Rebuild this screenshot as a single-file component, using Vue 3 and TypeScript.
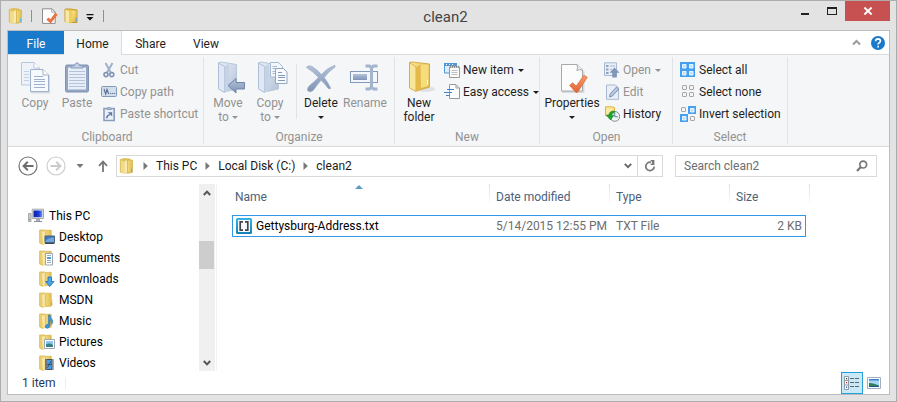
<script setup lang="ts">
import { ref } from 'vue'

interface PlaceItem {
  name: string
  icon: string
}

interface FileRow {
  name: string
  modified: string
  type: string
  size: string
}

const folderName = 'clean2'
const search = ref('')

const crumbs: string[] = ['This PC', 'Local Disk (C:)', folderName]

const places: PlaceItem[] = [
  { name: 'Desktop', icon: 'ov-desktop' },
  { name: 'Documents', icon: 'ov-documents' },
  { name: 'Downloads', icon: 'ov-downloads' },
  { name: 'MSDN', icon: 'ov-plain' },
  { name: 'Music', icon: 'ov-music' },
  { name: 'Pictures', icon: 'ov-pictures' },
  { name: 'Videos', icon: 'ov-videos' },
]

const files: FileRow[] = [
  { name: 'Gettysburg-Address.txt', modified: '5/14/2015 12:55 PM', type: 'TXT File', size: '2 KB' },
]
</script>

<template>
  <div class="window">
    <svg class="defs" width="0" height="0" aria-hidden="true">
      <defs>
        <linearGradient id="g-gold" x1="0" y1="0" x2="1" y2="1">
          <stop offset="0" stop-color="#fbe99c" />
          <stop offset="1" stop-color="#dca92f" />
        </linearGradient>
        <linearGradient id="g-gold-soft" x1="0" y1="0" x2="1" y2="0">
          <stop offset="0" stop-color="#f3da80" />
          <stop offset="1" stop-color="#dfbd52" />
        </linearGradient>
        <linearGradient id="g-steel" x1="0" y1="0" x2="1" y2="1">
          <stop offset="0" stop-color="#e9eff7" />
          <stop offset="1" stop-color="#b4c2d8" />
        </linearGradient>
        <linearGradient id="g-slate" x1="0" y1="0" x2="0" y2="1">
          <stop offset="0" stop-color="#b4c3da" />
          <stop offset="1" stop-color="#7f93b5" />
        </linearGradient>
        <linearGradient id="g-check" x1="0" y1="0" x2="0" y2="1">
          <stop offset="0" stop-color="#f79a6c" />
          <stop offset="1" stop-color="#e06432" />
        </linearGradient>
        <linearGradient id="g-file" x1="0" y1="0" x2="0" y2="1">
          <stop offset="0" stop-color="#35b6e8" />
          <stop offset="1" stop-color="#1480b8" />
        </linearGradient>
        <linearGradient id="g-screen" x1="0" y1="0" x2="1" y2="0">
          <stop offset="0" stop-color="#0a1fa8" />
          <stop offset="0.6" stop-color="#1a3ad8" />
          <stop offset="1" stop-color="#6c9cf0" />
        </linearGradient>
      </defs>
      <symbol id="folder" viewBox="0 0 16 16">
        <path d="M1.3 1.5 L5 .6 L11 1 V15 H4.5 L1.3 14Z" fill="#e2c25c" stroke="#d8b950" stroke-width=".8" />
        <path d="M2 2 L5 4 V15.5 L2 14Z" fill="#f3dc88" />
        <path d="M5.3 3.6 L8.3 2 V14.5 L5.3 15.6Z" fill="#f9eab0" />
        <path d="M8.5 2.3 L13.5 2 V14.4 L8.5 14.8Z" fill="url(#g-gold-soft)" stroke="#d3b145" stroke-width=".7" />
        <path d="M12.5 10.5 V14" stroke="#63b6e6" stroke-width="1.2" />
      </symbol>
      <symbol id="tree-folder" viewBox="0 0 16 16">
        <path d="M.6 1 H6 V14.6 L3.5 15.3 L.6 14Z" fill="#eacd6e" stroke="#d9b955" stroke-width=".8" />
        <path d="M3 3.2 L6.2 1.2 V14 L4 15.5Z" fill="#f8e8aa" />
        <path d="M6.3 1.3 H12.2 V14.2 L6.3 14.5Z" fill="url(#g-gold-soft)" stroke="#d9b955" stroke-width=".8" />
      </symbol>
      <symbol id="ov-plain" viewBox="0 0 16 16"><path d="M12.6 7.5 V14" stroke="#e2c76c" stroke-width="1.5" /><path d="M12.5 10.5 V13" stroke="#63b6e6" /></symbol>
      <symbol id="ov-desktop" viewBox="0 0 16 16">
        <path d="M6 7 H15.5 V13.5 H6Z" fill="#3f78c2" stroke="#4a6178" /><path d="M6.5 12 Q10 8 15 8.5 V13 H6.5Z" fill="#6fa6df" /><path d="M6 14.5 H15.5" stroke="#3d4c5b" />
      </symbol>
      <symbol id="ov-documents" viewBox="0 0 16 16">
        <path d="M6.5 3.5 H13.5 V15 H6.5Z" fill="#fff" stroke="#9aa7b5" /><path d="M8 5.5 H12 M8 10.5 H12 M8 12.5 H12" stroke="#97a9bf" /><path d="M8 7 H12 V9 H8Z" fill="#4f9bdc" />
      </symbol>
      <symbol id="ov-downloads" viewBox="0 0 16 16"><path d="M9 6 H12.5 V10.5 H15 L10.7 15.5 L6.5 10.5 H9Z" fill="#4aa5e8" stroke="#1c6fb8" stroke-width=".8" /></symbol>
      <symbol id="ov-music" viewBox="0 0 16 16">
        <path d="M9.5 2 H11 Q11.5 5 13.5 7 Q14.5 9.5 12.7 11.5 Q13.2 8.5 11 7.3 V12.5 Q10.5 15.5 7.7 15.3 Q5.5 14.5 6.7 12.4 Q7.8 11 9.5 11.5Z" fill="#3f97d8" stroke="#1d6aab" stroke-width=".5" />
      </symbol>
      <symbol id="ov-pictures" viewBox="0 0 16 16">
        <path d="M5.5 5.5 H15.5 V14.5 H5.5Z" fill="#fff" stroke="#9ba7b3" /><path d="M7 7 H14 V13 H7Z" fill="#8fc7ec" /><path d="M7 10.5 Q10 8.5 14 11 V13 H7Z" fill="#3a7f86" />
      </symbol>
      <symbol id="ov-videos" viewBox="0 0 16 16">
        <path d="M6 4 H14.5 V15 H6Z" fill="#46515e" /><path d="M8 5 H12.5 V9 H8Z M8 10 H12.5 V14 H8Z" fill="#4c9de0" /><path d="M7 4.5 V15 M13.6 4.5 V15" stroke="#dfe6ec" stroke-dasharray="1 1" /><path d="M8.5 12.5 L12 6" stroke="#25527d" />
      </symbol>
    </svg>

    <header class="titlebar">
      <div class="quick">
        <svg class="i16" viewBox="0 0 16 16"><use href="#folder" /></svg>
        <span class="tick first"></span>
        <button class="plain qprop" aria-label="Properties">
          <svg class="i16" viewBox="0 0 16 16">
            <path d="M.5 .8 H10 L13.2 4 V15.4 H.5Z" fill="#fdfdfd" stroke="#8c8c8c" />
            <path d="M9.7 1 V4.2 H13" fill="none" stroke="#a8a8a8" />
            <path d="M5.4 10.6 L8.5 13.4 L14.5 5.8" fill="none" stroke="#ea7345" stroke-width="3" />
          </svg>
        </button>
        <button class="plain qnew" aria-label="New folder">
          <svg class="i16" viewBox="0 0 16 16">
            <path d="M1 1 H6 L13 2 V14.5 H5 L1 13.5Z" fill="#efc94f" stroke="#c39a2e" />
            <path d="M1.5 1.5 L5 3.5 V15.5 L1.5 14Z" fill="#fae9a0" />
            <path d="M5.5 3.5 L8 2.5 V14.3 L5.5 15.5Z" fill="#efcf63" />
            <path d="M8.5 3 H12.5 V14 H8.5Z" fill="url(#g-gold)" />
            <path d="M12.3 10 V13.5" stroke="#55a9dd" />
          </svg>
        </button>
        <button class="plain qmore" aria-label="Customize toolbar">
          <svg width="8" height="8" viewBox="0 0 8 8"><path d="M.5 0 H7.5 V1.2 H.5Z M.5 3 H7.5 L4 6.5Z" fill="#111" /></svg>
        </button>
        <span class="tick"></span>
      </div>
      <h1 class="title">{{ folderName }}</h1>
      <div class="controls">
        <button class="plain wbtn" aria-label="Minimize"><svg width="10" height="12" viewBox="0 0 10 12"><path d="M1 9 H9 V11 H1Z" fill="#222" /></svg></button>
        <button class="plain wbtn" aria-label="Maximize"><svg width="10" height="12" viewBox="0 0 10 12"><path d="M.5 3 V11 M9.5 3 V11 M0 10.5 H10" stroke="#222" fill="none" /><path d="M0 3 H10 V5 H0Z" fill="#222" /></svg></button>
        <button class="plain close" aria-label="Close"><svg width="10" height="8" viewBox="0 0 10 8"><path d="M1.4 .5 L8.6 7.5 M8.6 .5 L1.4 7.5" stroke="#fff" stroke-width="1.9" /></svg></button>
      </div>
    </header>

    <div class="frame">
      <div class="tabs">
        <button class="tab file">File</button>
        <button class="tab active">Home</button>
        <button class="tab share">Share</button>
        <button class="tab view">View</button>
        <button class="plain collapse" aria-label="Collapse ribbon"><svg width="9" height="7" viewBox="0 0 9 7"><path d="M1 5.5 L4.5 2 L8 5.5" fill="none" stroke="#9a9a9a" stroke-width="2" /></svg></button>
        <button class="plain help" aria-label="Help">
          <svg width="14" height="14" viewBox="0 0 14 14"><circle cx="7" cy="7" r="7" fill="#1979ca" /><path d="M4.6 5.2 Q4.7 2.9 7 2.9 Q9.4 3 9.4 5 Q9.3 6.2 8 6.9 Q7.1 7.4 7.1 8.6 M7.1 9.8 V11.6" fill="none" stroke="#fff" stroke-width="1.7" /></svg>
        </button>
      </div>

      <div class="ribbon">
        <section class="group clipboard">
          <div class="body">
            <button class="big off">
              <svg class="i32" viewBox="0 0 32 32">
                <path d="M2.5 1.5 H15 L20.5 7 V24 H2.5Z" fill="#eef3f9" stroke="#b9c7dc" />
                <path d="M15 1.5 V7 H20.5" fill="#fff" stroke="#b9c7dc" />
                <path d="M5 10.5 H10 M5 13.5 H10 M5 16.5 H10 M5 19.5 H10" stroke="#c5d1e2" />
                <path d="M12 31.5 H30 V14" stroke="#d5dae2" fill="none" stroke-width="2" />
                <path d="M11.5 8.5 H24 L29.5 14 V30.5 H11.5Z" fill="#f6f9fd" stroke="#9fb1cb" />
                <path d="M24 8.5 V14 H29.5" fill="#fff" stroke="#9fb1cb" />
                <path d="M15 15.5 H24 M15 18.5 H26 M15 20.5 H26 M15 23.5 H26 M15 26.5 H26" stroke="#9fb1cb" />
              </svg>
              <span>Copy</span>
            </button>
            <button class="big off">
              <svg class="i32" viewBox="0 0 32 32">
                <rect x="4.5" y="4" width="23" height="27" rx="1.5" fill="#93a5c2" stroke="#7f93b5" />
                <rect x="7" y="6.5" width="18" height="22" fill="#e7eef8" />
                <path d="M8 10.5 H24 M8 13.5 H24 M8 16.5 H24 M8 19.5 H24 M8 22.5 H24 M8 25.5 H24" stroke="#b6c4da" />
                <path d="M10 7 V4.8 H13.5 Q14 1.8 16 1.8 Q18 1.8 18.5 4.8 H22 V7Z" fill="#c6d2e5" stroke="#8699b9" />
              </svg>
              <span>Paste</span>
            </button>
            <div class="stack">
              <button class="small off">
                <svg class="i16" viewBox="0 0 16 16"><path d="M4.5 1 L9.8 10.5 M11.5 1 L6 10.5" stroke="#9fb1cb" stroke-width="2" /><circle cx="5" cy="12.6" r="2" fill="none" stroke="#8195b6" stroke-width="1.6" /><circle cx="10.8" cy="12.6" r="2" fill="none" stroke="#8195b6" stroke-width="1.6" /></svg>
                <span>Cut</span>
              </button>
              <button class="small off">
                <svg class="i16" viewBox="0 0 16 16"><rect x=".5" y="2.5" width="15" height="10" rx="1" fill="#d3deed" stroke="#8498b8" /><path d="M3 5 L4.7 10 L6 5.5 L7.7 10 M9 9.5 H10.3 M11 9.5 H12.3 M13 9.5 H14.2" fill="none" stroke="#5f7599" stroke-width="1.2" /></svg>
                <span>Copy path</span>
              </button>
              <button class="small off">
                <svg class="i16" viewBox="0 0 16 16"><path d="M3 2.5 H13.2 V14.5 H3Z" fill="#e9eff8" stroke="#8b9dbc" stroke-width="1.6" /><path d="M6 3.5 V2 H7 Q8 .2 9.2 2 H10.3 V3.5Z" fill="#b9c7dc" stroke="#8b9dbc" /><path d="M5.8 12.2 Q5.6 9.6 8.8 8.6" fill="none" stroke="#5f7599" stroke-width="1.5" /><path d="M6.8 6.2 H11.2 V10.6Z" fill="#5f7599" /></svg>
                <span>Paste shortcut</span>
              </button>
            </div>
          </div>
          <h2>Clipboard</h2>
        </section>

        <section class="group organize">
          <div class="body">
            <button class="big off">
              <svg class="i32" viewBox="0 0 32 32">
                <path d="M6.5 2 L9 1 L24.5 3.5 V28 L12 31Z" fill="url(#g-steel)" stroke="#b9c7dc" />
                <path d="M6.5 2 L12.5 5.5 V31.5 L6.5 28Z" fill="#dfe8f4" stroke="#afbfd6" />
                <path d="M12.5 5.5 L17 3 V29 L12.5 31.5Z" fill="#c6d3e5" />
                <path d="M16 24.5 L24 17.5 V21.5 H32.5 V28 H24 V32Z" fill="url(#g-slate)" stroke="#7086aa" />
              </svg>
              <span>Move<br />to <i class="caret"></i></span>
            </button>
            <button class="big off">
              <svg class="i32" viewBox="0 0 32 32">
                <path d="M4.5 2 L7 1 L24.5 4 V28 L10 31Z" fill="url(#g-steel)" stroke="#b9c7dc" />
                <path d="M4.5 2 L10.5 5.5 V31.5 L4.5 28Z" fill="#dfe8f4" stroke="#afbfd6" />
                <path d="M10.5 5.5 L15 3 V29 L10.5 31.5Z" fill="#c6d3e5" />
                <path d="M16.5 1.5 H24.5 L28.5 5.5 V16 H16.5Z" fill="#f3f7fc" stroke="#a9b9d1" />
                <path d="M18.5 5.5 H23 M18.5 7.5 H23 M18.5 10.5 H22 M18.5 12.5 H22" stroke="#a9b9d1" />
                <path d="M21.5 7.5 H29.5 L33 11 V22.5 H21.5Z" fill="#f8fafd" stroke="#93a6c3" />
                <path d="M24 11.5 H28 M24 14.5 H31 M24 16.5 H31 M24 19.5 H31" stroke="#8599b9" />
              </svg>
              <span>Copy<br />to <i class="caret"></i></span>
            </button>
            <span class="divider"></span>
            <button class="big">
              <svg class="i32" viewBox="0 0 32 32">
                <path d="M1.3 6.3 Q4 3.5 7 5.5 Q12.5 9 16.5 13.5 Q22 7 29.8 4.2 L30 6 Q23.5 10.5 19.2 16.5 Q23 21.5 25.8 27.5 L23.5 27.8 Q19.8 22.5 16 19.3 Q11.5 24.5 8.3 29.3 Q5.5 32 2.5 29.5 Q1.8 26.7 5.5 23.7 Q10 20.5 13.5 16.3 Q8 10.5 1.3 6.3Z" fill="url(#g-slate)" stroke="#90a3c2" stroke-width=".6" />
              </svg>
              <span>Delete<br /><i class="caret"></i></span>
            </button>
            <button class="big off wide">
              <svg class="i32" viewBox="0 0 32 32">
                <rect x="1.5" y="10.5" width="27" height="11" fill="#f3f7fd" stroke="#8398bb" />
                <rect x="4" y="13" width="14" height="6" fill="url(#g-slate)" />
                <path d="M16.5 5 H20.5 L22.5 7 L24.5 5 H28.5 M22.5 6 V27 M16.5 28 H20.5 L22.5 26 L24.5 28 H28.5" fill="none" stroke="#a3b4cf" stroke-width="3" />
              </svg>
              <span>Rename</span>
            </button>
          </div>
          <h2>Organize</h2>
        </section>

        <section class="group new">
          <div class="body">
            <button class="big">
              <svg class="i32" viewBox="0 0 32 32">
                <ellipse cx="22" cy="28" rx="10" ry="3" fill="#dfe1e3" />
                <path d="M6.5 1.5 L9 1 L26.5 3 V26 L13 30Z" fill="url(#g-gold)" stroke="#d3ab45" />
                <path d="M6.5 1.5 L13 6 V30.5 L6.5 27Z" fill="#f9e69a" stroke="#d8b048" />
                <path d="M13 6 L17.5 3.5 V28.5 L13 30.5Z" fill="#e3ba49" />
                <path d="M18 4 L25.5 3.7 V25 L18 27Z" fill="#f5dc7c" />
                <path d="M24.5 19 V23" stroke="#fff" />
              </svg>
              <span>New<br />folder</span>
            </button>
            <div class="stack">
              <button class="small">
                <svg class="i16" viewBox="0 0 16 16"><path d="M.5 1.5 H12.5 V11 H.5Z" fill="#dcecfa" stroke="#4f97d6" /><path d="M0 1 H13 V4 H0Z" fill="#4f97d6" /><path d="M2 2.5 H3 M5 2.5 H6 M8 2.5 H9" stroke="#fff" /><path d="M5.5 5 H15.5 V15.5 H5.5Z" fill="#fbfbfb" stroke="#999" /><path d="M6 4.8 H16" stroke="#888" stroke-width="2" stroke-dasharray="1 1" /><path d="M7.5 8.5 H13.5 M7.5 10.5 H13.5 M7.5 12.5 H13.5" stroke="#c0c0c0" /></svg>
                <span>New item <i class="caret"></i></span>
              </button>
              <button class="small">
                <svg class="i16" viewBox="0 0 16 16"><path d="M5.5 .5 H12 L15.5 4 V14.5 H5.5Z" fill="#fcfcfc" stroke="#999" /><path d="M12 1 V4 H15" fill="none" stroke="#999" /><path d="M3 5.5 H10 M0 8.5 H8 M2 11.5 H6" stroke="#4585c7" /></svg>
                <span>Easy access <i class="caret"></i></span>
              </button>
            </div>
          </div>
          <h2>New</h2>
        </section>

        <section class="group open">
          <div class="body">
            <button class="big prop">
              <svg class="i32" viewBox="0 0 32 32">
                <path d="M6 31 H27.5 V10" fill="none" stroke="#d7d9db" stroke-width="2" />
                <path d="M5.5 3.5 H21 L26.5 9 V30 H5.5Z" fill="#fcfcfd" stroke="#a5a8ac" />
                <path d="M21 3.5 Q22.5 7 20.8 9.5 Q23.5 8 26.5 9" fill="#eee" stroke="#a5a8ac" />
                <path d="M13.6 24.3 L16.6 21.8 L20.2 25 L28 14.2 L31.3 16.3 L21.8 31 Q20.6 32 19.4 31Z" fill="url(#g-check)" stroke="#dc6b3e" stroke-width=".7" />
              </svg>
              <span>Properties<br /><i class="caret"></i></span>
            </button>
            <div class="stack">
              <button class="small off">
                <svg class="i16" viewBox="0 0 16 16"><path d="M.5 .8 H12.5 V13.5 H.5Z" fill="#e7eef7" stroke="#a9b9d1" /><path d="M2 3 H4.5 V5 H2Z M2 6.5 H4.5 V8.5 H2Z M2 10 H4.5 V12 H2Z" fill="#8ea2c1" /><path d="M6 4 H11 M6 7.5 H8" stroke="#a9b9d1" /><path d="M10.5 5.5 L15.6 10.8 H12.8 V15.5 H8.2 V10.8 H5.5Z" fill="#8296b8" /></svg>
                <span>Open <i class="caret"></i></span>
              </button>
              <button class="small off">
                <svg class="i16" viewBox="0 0 16 16"><path d="M2.5 1 H11.5 L14.5 4 V15.3 H2.5Z" fill="#e9eff8" stroke="#a9b9d1" /><path d="M5.5 13 L6.2 10 L12.5 3 L14.8 5 L8.4 12Z" fill="#b9c8de" stroke="#7d92b4" /></svg>
                <span>Edit</span>
              </button>
              <button class="small">
                <svg class="i16" viewBox="0 0 16 16"><path d="M1.5 .8 H7 L10.5 1.5 V9 L4.5 10.5 L1.5 9.5Z" fill="#fae89c" stroke="#d9b23f" /><circle cx="10.8" cy="10.4" r="4.9" fill="#f2f5f8" stroke="#808a94" /><path d="M10.8 6.5 V10.8 H14" fill="none" stroke="#5f7f9f" /><path d="M10.3 5 Q5.5 4.7 4.8 9 H2.3 L6.5 14 L10 9.2 H7.6 Q7.8 6.8 10.3 7Z" fill="#1fa32c" stroke="#0d7f1b" stroke-width=".5" /></svg>
                <span>History</span>
              </button>
            </div>
          </div>
          <h2>Open</h2>
        </section>

        <section class="group select">
          <div class="body">
            <div class="stack">
              <button class="small">
                <svg class="i16" viewBox="0 0 16 16"><path d="M0 0 H15 V15 H0Z" fill="#479ff0" /><path d="M2.5 2.5 H6 V6 H2.5Z M9.5 2.5 H13 V6 H9.5Z M2.5 9.5 H6 V13 H2.5Z M9.5 9.5 H13 V13 H9.5Z" fill="#bfe2fb" stroke="#e6f5ff" /></svg>
                <span>Select all</span>
              </button>
              <button class="small">
                <svg class="i16" viewBox="0 0 16 16"><g fill="#f5f6f7" stroke="#a6a6a6"><rect x="2.5" y="1.5" width="4" height="4" rx=".5" /><rect x="9.5" y="1.5" width="4" height="4" rx=".5" /><rect x="2.5" y="8.5" width="4" height="4" rx=".5" /><rect x="9.5" y="8.5" width="4" height="4" rx=".5" /></g></svg>
                <span>Select none</span>
              </button>
              <button class="small">
                <svg class="i16" viewBox="0 0 16 16"><path d="M8 0 H16 V8 H8Z M0 8 H8 V16 H0Z" fill="#479ff0" /><path d="M10.5 2.5 H14 V6 H10.5Z M2.5 10.5 H6 V14 H2.5Z" fill="#bfe2fb" stroke="#e6f5ff" /><g fill="#f5f6f7" stroke="#a6a6a6"><rect x="1.5" y="1.5" width="4" height="4" rx=".5" /><rect x="10.5" y="10.5" width="4" height="4" rx=".5" /></g></svg>
                <span>Invert selection</span>
              </button>
            </div>
          </div>
          <h2>Select</h2>
        </section>
      </div>

      <div class="address-row">
        <button class="plain" aria-label="Back"><svg width="20" height="20" viewBox="0 0 20 20"><circle cx="10" cy="10" r="9" fill="none" stroke="#747474" stroke-width="1.2" /><path d="M15.5 10 H6 M9.8 5.8 L5.6 10 L9.8 14.2" fill="none" stroke="#6c6c6c" stroke-width="2" /></svg></button>
        <button class="plain" aria-label="Forward"><svg width="20" height="20" viewBox="0 0 20 20"><circle cx="10" cy="10" r="9" fill="none" stroke="#cdcdcd" stroke-width="1.2" /><path d="M4.5 10 H14 M10.2 5.8 L14.4 10 L10.2 14.2" fill="none" stroke="#cbcbcb" stroke-width="2" /></svg></button>
        <button class="plain recent" aria-label="Recent locations"><svg width="8" height="6" viewBox="0 0 8 6"><path d="M.5 1 H7.5 L4 5Z" fill="#777" /></svg></button>
        <button class="plain up" aria-label="Up"><svg width="10" height="12" viewBox="0 0 10 12"><path d="M5 12 V2 M1 5.8 L5 1.6 L9 5.8" fill="none" stroke="#777" stroke-width="1.8" /></svg></button>
        <div class="address">
          <svg class="i16" viewBox="0 0 16 16"><use href="#folder" /></svg>
          <template v-for="crumb in crumbs" :key="crumb">
            <svg class="chev" width="5" height="8" viewBox="0 0 5 8"><path d="M.5 0 L4.8 4 L.5 8Z" fill="#777" /></svg>
            <button class="plain crumb">{{ crumb }}</button>
          </template>
          <button class="plain drop" aria-label="Previous locations"><svg width="8" height="6" viewBox="0 0 8 6"><path d="M.8 .8 L4 4.2 L7.2 .8" fill="none" stroke="#666" stroke-width="1.9" /></svg></button>
          <button class="plain refresh" aria-label="Refresh"><svg width="12" height="12" viewBox="0 0 12 12"><path d="M7 2.3 A4.2 4.2 0 1 0 10.2 6.4" fill="none" stroke="#777" stroke-width="1.7" /><path d="M6.2 0 H10.4 V5 H6.2 L8.4 2.6Z" fill="#777" /></svg></button>
        </div>
        <label class="search">
          <input v-model="search" type="text" placeholder="Search clean2" aria-label="Search clean2" />
          <svg width="12" height="12" viewBox="0 0 12 12"><circle cx="7.2" cy="4.6" r="3.4" fill="none" stroke="#777" stroke-width="1.7" /><path d="M4.8 7 L1 11" stroke="#777" stroke-width="2.2" /></svg>
        </label>
      </div>

      <div class="main">
        <nav class="tree">
          <ul>
            <li class="root">
              <a href="#">
                <svg class="i16" viewBox="0 0 16 16"><path d="M.5 5.5 H3 V13.5 H.5Z" fill="#c9ccce" stroke="#8b8f92" stroke-width=".7" /><path d="M1 11.5 H2" stroke="#31b53b" /><path d="M4.2 1.2 H15.5 V10.5 H4.2Z" fill="#e6e8ea" stroke="#a6a9ac" /><path d="M5.5 2.5 H14.3 V9.2 H5.5Z" fill="url(#g-screen)" /><path d="M8 11 H12 V13 H8Z" fill="#a9acae" /><path d="M6 13.5 H14" stroke="#8e9194" /></svg>
                <span>This PC</span>
              </a>
            </li>
            <li v-for="place in places" :key="place.name">
              <a href="#">
                <svg class="i16" viewBox="0 0 16 16"><use href="#tree-folder" /><use :href="'#' + place.icon" /></svg>
                <span>{{ place.name }}</span>
              </a>
            </li>
          </ul>
          <div class="scrollbar">
            <button class="plain arrow" aria-label="Scroll up"><svg width="8" height="6" viewBox="0 0 8 6"><path d="M.8 5 L4 1.6 L7.2 5" fill="none" stroke="#555" stroke-width="2" /></svg></button>
            <div class="track"><div class="thumb"></div></div>
            <button class="plain arrow" aria-label="Scroll down"><svg width="8" height="6" viewBox="0 0 8 6"><path d="M.8 1 L4 4.4 L7.2 1" fill="none" stroke="#555" stroke-width="2" /></svg></button>
          </div>
        </nav>

        <div class="files">
          <table>
            <colgroup>
              <col class="c-name" />
              <col class="c-mid" />
              <col class="c-mid" />
              <col class="c-size" />
              <col class="c-end" />
            </colgroup>
            <thead>
              <tr>
                <th class="sorted">
                  Name
                  <svg class="sort" width="8" height="4" viewBox="0 0 8 4"><path d="M0 4 L4 0 L8 4Z" fill="#5d9cc4" /></svg>
                </th>
                <th>Date modified</th>
                <th>Type</th>
                <th colspan="2">Size</th>
              </tr>
            </thead>
            <tbody>
              <tr v-for="file in files" :key="file.name">
                <td class="name">
                  <span class="file-name">
                    <svg class="i16" viewBox="0 0 16 16"><rect width="16" height="16" rx="1.5" fill="url(#g-file)" /><rect x="2" y="2" width="12" height="12" fill="#f6fafc" /><path d="M7 3.8 H4.2 V12.2 H7 M9 3.8 H11.8 V12.2 H9" fill="none" stroke="#444" stroke-width="1.7" /></svg>
                    {{ file.name }}
                  </span>
                </td>
                <td>{{ file.modified }}</td>
                <td>{{ file.type }}</td>
                <td class="size">{{ file.size }}</td>
                <td class="end"></td>
              </tr>
            </tbody>
          </table>
        </div>
      </div>

      <footer class="status">
        <span class="count">{{ files.length }} item</span>
        <button class="plain mode on" aria-label="Details view">
          <svg width="16" height="14" viewBox="0 0 16 14"><path d="M.5 .5 H4.5 V13.5 H.5Z M.5 4.5 H4.5 M.5 9 H4.5" fill="#fff" stroke="#8c9aa5" /><path d="M2 2 H3.2 V3.2 H2Z" fill="#333" /><path d="M2 6 H3.2 V7.2 H2Z" fill="#d02020" /><path d="M2 10.5 H3.2 V11.7 H2Z" fill="#1749c0" /><path d="M6 2.5 H10 M11 2.5 H15 M6 6.5 H10 M11 6.5 H15 M6 10.5 H10 M11 10.5 H15" stroke="#5d666d" /></svg>
        </button>
        <button class="plain mode" aria-label="Large icons view">
          <svg width="14" height="12" viewBox="0 0 14 12"><path d="M.5 .5 H13.5 V11.5 H.5Z" fill="#fff" stroke="#a4aebc" /><path d="M2 2 H12 V10 H2Z" fill="#a8d6f4" /><path d="M2 2 H12 V3.5 H2Z" fill="#3d85c8" /><path d="M2 6 Q6 5.5 12 8.5 V10 H2Z" fill="#2e7f5b" /><path d="M2 9 H12 V10 H2Z" fill="#1d5b86" /></svg>
        </button>
      </footer>
    </div>
  </div>
</template>

<style>
body {
  margin: 0;
}
</style>

<style scoped>
.window {
  box-sizing: border-box;
  height: 100vh;
  display: flex;
  flex-direction: column;
  padding: 0 6px 6px;
  border: 1px solid #adadad;
  background: #e3e3e3;
  color: #1e1e1e;
  font: 12px/16px "Segoe UI", Roboto, sans-serif;
}
.window * {
  box-sizing: border-box;
}
.defs {
  position: absolute;
}
button {
  font: inherit;
  color: inherit;
  margin: 0;
  padding: 0;
  border: 0;
  background: none;
  white-space: nowrap;
}
.plain {
  display: flex;
  align-items: center;
  justify-content: center;
}
svg {
  display: block;
  flex: none;
}
.i16 {
  width: 16px;
  height: 16px;
}
.i32 {
  width: 32px;
  height: 32px;
  overflow: visible;
}

/* Title bar */
.titlebar {
  display: grid;
  grid-template-columns: 1fr auto 1fr;
  height: 29px;
  flex: none;
}
.quick {
  display: flex;
  align-items: center;
  padding-left: 1px;
}
.tick {
  width: 1px;
  height: 12px;
  background: #8f8f8f;
}
.tick.first {
  margin-left: 7px;
}
.qprop {
  margin-left: 10px;
}
.qnew {
  margin-left: 6px;
}
.qmore {
  margin: 4px 9px 0 6px;
}
.title {
  margin: 0;
  padding: 6px 6px 0 0;
  font-size: 15px;
  line-height: 20px;
  font-weight: 400;
  color: #444;
}
.controls {
  display: flex;
  justify-content: flex-end;
  align-items: flex-start;
}
.wbtn {
  width: 27px;
  height: 17px;
}
.close {
  width: 45px;
  height: 20px;
  background: #c75050;
}

/* Frame and tabs */
.frame {
  flex: 1;
  min-height: 0;
  display: flex;
  flex-direction: column;
  border: 1px solid #bcbcbc;
  background: #fff;
}
.tabs {
  display: flex;
  flex: none;
  height: 24px;
  border-bottom: 1px solid #dadbdc;
}
.tab {
  width: 56px;
  height: 23px;
  padding-top: 2px;
}
.tab.file {
  background: #1979ca;
  color: #fff;
}
.tab.active {
  width: 58px;
  height: 24px;
  background: #f5f6f7;
  border-right: 1px solid #dadbdc;
}
.share {
  width: 57px;
}
.view {
  width: 54px;
}
.collapse {
  margin-left: auto;
  width: 20px;
}
.help {
  width: 14px;
  margin: 0 4px 0 5px;
}

/* Ribbon */
.ribbon {
  display: flex;
  flex: none;
  padding: 2px 0;
  background: #f5f6f7;
  border-bottom: 1px solid #dadbdc;
}
.group {
  display: flex;
  flex-direction: column;
  padding: 2px 3px 0;
  border-right: 1px solid #e2e3e4;
}
.group h2 {
  margin: 0;
  font-size: 12px;
  line-height: 14px;
  font-weight: 400;
  text-align: center;
  color: #929292;
}
.clipboard {
  width: 196px;
  padding-left: 6px;
}
.organize {
  width: 191px;
}
.new {
  width: 145px;
}
.open {
  width: 133px;
  padding-left: 4px;
}
.select {
  width: 115px;
}
.body {
  display: flex;
  height: 71px;
}
.big {
  flex: none;
  width: 42px;
  display: flex;
  flex-direction: column;
  align-items: center;
  gap: 3px;
  padding-top: 2px;
  line-height: 14px;
}
.big.wide {
  width: 46px;
}
.big.prop {
  width: 56px;
}
.off {
  color: #929292;
}
.divider {
  width: 1px;
  height: 55px;
  margin: 5px 3px 0 5px;
  background: #e2e3e4;
}
.stack {
  display: flex;
  flex-direction: column;
  padding-left: 4px;
}
.clipboard .stack {
  padding-left: 3px;
}
.small {
  display: flex;
  align-items: center;
  gap: 3px;
  height: 22px;
}
.caret {
  display: inline-block;
  margin-left: 1px;
  vertical-align: middle;
  border: 3px solid transparent;
  border-top-color: currentColor;
  border-bottom-width: 0;
}
.big br + .caret {
  margin-left: 0;
}

/* Address row */
.address-row {
  display: flex;
  flex: none;
  align-items: center;
  height: 37px;
  padding: 0 12px 0 10px;
}
.address-row > .plain {
  margin-right: 8px;
}
.address-row > .recent {
  margin-left: 2px;
}
.address-row > .plain.up {
  margin: 0 8px 0 6px;
}
.address {
  flex: 1;
  display: flex;
  align-items: center;
  height: 22px;
  padding-left: 2px;
  border: 1px solid #d9d9d9;
  color: #1a1a1a;
}
.chev {
  margin-left: 8px;
}
.crumb {
  margin-left: 8px;
}
.drop {
  margin-left: auto;
  width: 19px;
  height: 20px;
}
.refresh {
  width: 25px;
  height: 20px;
  border-left: 1px solid #d9d9d9;
}
.search {
  width: 202px;
  height: 22px;
  margin-left: 12px;
  padding: 0 8px;
  display: flex;
  align-items: center;
  border: 1px solid #d9d9d9;
}
.search input {
  flex: 1;
  min-width: 0;
  padding: 0;
  border: 0;
  outline: 0;
  background: none;
  font: inherit;
}
.search input::placeholder {
  color: #6d6d6d;
  opacity: 1;
}

/* Main area */
.main {
  flex: 1;
  min-height: 0;
  display: flex;
}
.tree {
  display: flex;
  width: 209px;
  overflow: hidden;
  border-right: 1px solid #f2f2f2;
}
.tree ul {
  flex: 1;
  margin: 0;
  padding: 21px 0 0;
  list-style: none;
}
.tree li {
  padding-left: 31px;
}
.tree .root {
  padding-left: 20px;
}
.tree a {
  display: flex;
  align-items: center;
  gap: 4px;
  height: 21px;
  color: #000;
  text-decoration: none;
}
.root a {
  gap: 5px;
}
.scrollbar {
  display: flex;
  flex-direction: column;
  width: 16px;
  margin-right: 1px;
  background: #f0f0f0;
}
.arrow {
  height: 17px;
}
.track {
  flex: 1;
  padding-top: 40px;
}
.thumb {
  height: 28px;
  margin-right: 1px;
  background: #cdcdcd;
}
.files {
  flex: 1;
  padding-left: 15px;
}
table {
  width: 578px;
  table-layout: fixed;
  border-collapse: separate;
  border-spacing: 0;
}
.c-name {
  width: 258px;
}
.c-mid {
  width: 120px;
}
.c-size {
  width: 76px;
}
.c-end {
  width: 4px;
}
th {
  height: 22px;
  padding: 3px 0 0 6px;
  font-weight: 400;
  text-align: left;
  color: #4c607a;
  border-right: 1px solid;
  border-image: linear-gradient(#d5dfec, #fff) 1;
}
th.sorted {
  position: relative;
  padding-left: 3px;
}
.sort {
  position: absolute;
  top: 1px;
  left: 50%;
  margin-left: -6px;
}
tbody::before {
  content: "";
  display: table-row;
  height: 9px;
}
td {
  height: 22px;
  padding: 0 0 0 6px;
  color: #6d6d6d;
  white-space: nowrap;
  border: solid #3399e6;
  border-width: 1px 0;
}
td.name {
  padding-left: 3px;
  border-left-width: 1px;
  color: #000;
}
.file-name {
  display: flex;
  align-items: center;
  gap: 4px;
}
td.size {
  padding: 0 3px 0 0;
  text-align: right;
  border-right-width: 1px;
}
td.end {
  padding: 0;
  border: 0;
}

/* Status bar */
.status {
  display: flex;
  flex: none;
  align-items: center;
  height: 23px;
  padding: 0 4px 0 14px;
  color: #1e395b;
}
.count {
  margin-right: auto;
  padding-right: 10px;
  line-height: 12px;
  border-right: 1px solid #eee;
}
.mode {
  width: 22px;
  height: 22px;
}
.mode.on {
  border: 1px solid #26a0da;
  background: #cbe8f6;
}
</style>
